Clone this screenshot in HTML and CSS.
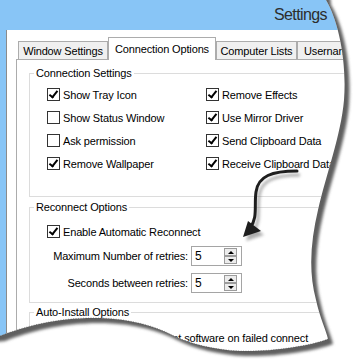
FILE: index.html
```html
<!DOCTYPE html>
<html lang="en">
<head>
    <meta charset="UTF-8">
    <title>Settings</title>
    <link rel="stylesheet" href="styles.css">
</head>
<body>
    <div class="window">
        <div class="titlebar">Settings</div>
        <div class="client">
            <div class="tabctrl">
                <div class="tabs">
                    <div class="tab t1">Window Settings</div>
                    <div class="tab t2 active">Connection Options</div>
                    <div class="tab t3">Computer Lists</div>
                    <div class="tab t4">Usernames</div>
                </div>
                <div class="panel">
                    <fieldset class="group group-connection">
                        <legend>Connection Settings</legend>
                        <div class="check-grid">
                            <label class="check"><span class="cb on"></span>Show Tray Icon</label>
                            <label class="check"><span class="cb on"></span>Remove Effects</label>
                            <label class="check"><span class="cb"></span>Show Status Window</label>
                            <label class="check"><span class="cb on"></span>Use Mirror Driver</label>
                            <label class="check"><span class="cb"></span>Ask permission</label>
                            <label class="check"><span class="cb on"></span>Send Clipboard Data</label>
                            <label class="check"><span class="cb on"></span>Remove Wallpaper</label>
                            <label class="check"><span class="cb on"></span>Receive Clipboard Data</label>
                        </div>
                    </fieldset>

                    <fieldset class="group group-reconnect">
                        <legend>Reconnect Options</legend>
                        <label class="check single"><span class="cb on"></span>Enable Automatic Reconnect</label>
                        <div class="retries">
                            <span class="field-label">Maximum Number of retries:</span>
                            <div class="spin">
                                <span class="spin-value">5</span>
                                <span class="spin-buttons"><span class="spin-btn up"></span><span class="spin-btn down"></span></span>
                            </div>
                            <span class="field-label">Seconds between retries:</span>
                            <div class="spin">
                                <span class="spin-value">5</span>
                                <span class="spin-buttons"><span class="spin-btn up"></span><span class="spin-btn down"></span></span>
                            </div>
                        </div>
                    </fieldset>

                    <fieldset class="group group-install">
                        <legend>Auto-Install Options</legend>
                        <label class="check single"><span class="cb on"></span>Auto-install management software on failed connect</label>
                    </fieldset>
                </div>
            </div>
        </div>
    </div>

    <!-- torn paper edge, shadow and callout arrow -->
    <svg class="torn" width="353" height="362" viewBox="0 0 353 362">
        <defs>
            <filter id="soft" x="-20%" y="-20%" width="140%" height="140%">
                <feGaussianBlur stdDeviation="1.6"/>
            </filter>
            <clipPath id="outside">
                <path clip-rule="evenodd" d="M-20 -20H380V380H-20Z M-10 -10 L325 -10 L326 0 C338 20 347 60 344 100 C341 135 326 175 318 210 C311 240 308 270 316 300 C320 318 326 330 328 339 C310 346 270 352 240 351 C215 350 190 344 172 335 C155 326 130 319 100 318 C60 317 25 326 0 336 L-10 337 Z"/>
            </clipPath>
        </defs>

        <g class="arrow-shadow" transform="translate(3 4)" filter="url(#soft)">
            <path d="M297 171 C272 171 258 176 256 192 C254 206 258 218 250 228" fill="none" stroke="#777" stroke-width="3"/>
            <polygon points="243,237 248,221 261,231" fill="#777"/>
        </g>
        <path d="M297 171 C272 171 258 176 256 192 C254 206 258 218 250 228" fill="none" stroke="#1e1e1e" stroke-width="3" stroke-linecap="round"/>
        <polygon points="243,237 248,221 261,231" fill="#1e1e1e"/>

        <path fill="#fff" fill-rule="evenodd" d="M-20 -20H380V380H-20Z M-10 -10 L325 -10 L326 0 C338 20 347 60 344 100 C341 135 326 175 318 210 C311 240 308 270 316 300 C320 318 326 330 328 339 C310 346 270 352 240 351 C215 350 190 344 172 335 C155 326 130 319 100 318 C60 317 25 326 0 336 L-10 337 Z"/>
        <g clip-path="url(#outside)">
            <path fill="#5e5e5e" filter="url(#soft)" transform="translate(5 5)" d="M-10 -10 L325 -10 L326 0 C338 20 347 60 344 100 C341 135 326 175 318 210 C311 240 308 270 316 300 C320 318 326 330 328 339 C310 346 270 352 240 351 C215 350 190 344 172 335 C155 326 130 319 100 318 C60 317 25 326 0 336 L-10 337 Z"/>
        </g>
        <path class="tear" d="M328 339 C310 346 270 352 240 351 C215 350 190 344 172 335 C155 326 130 319 100 318 C60 317 25 326 0 336"/>
    </svg>
</body>
</html>
```

FILE: styles.css
```css
body {
    margin: 0;
    width: 353px;
    height: 362px;
    overflow: hidden;
    position: relative;
    background-color: #fff;
    font-family: 'Liberation Sans', Arial, sans-serif;
    font-size: 11px;
    letter-spacing: -0.15px;
    color: #000;
}
.window {
    width: 353px;
    height: 362px;
    background-color: #88c5f6;
    display: flex;
    flex-direction: column;
}
.titlebar {
    height: 30px;
    line-height: 30px;
    text-align: right;
    padding-right: 26px;
    font-size: 16px;
    letter-spacing: -0.6px;
    color: #2d2d2d;
}
.client {
    flex: 1;
    margin-left: 6px;
    border-left: 1px solid #8b8b8b;
    background-color: #fff;
    padding: 7px 0 0 9px;
    overflow: hidden;
}
.tabs {
    display: flex;
    align-items: flex-end;
    padding-left: 2px;
}
.tab {
    flex-shrink: 0;
    box-sizing: border-box;
    height: 18px;
    border: 1px solid #acacac;
    border-bottom: none;
    background-color: #f0f0f0;
    padding-top: 1px;
    line-height: 16px;
    text-align: center;
    white-space: nowrap;
}
.t1 { width: 90px; }
.t2 { width: 108px; }
.t3 { width: 81px; }
.t4 {
    width: 80px;
    text-align: left;
    padding-left: 6px;
}
.tab.active {
    height: 23px;
    padding-top: 3px;
    margin-bottom: -1px;
    background-color: #fff;
    position: relative;
    z-index: 1;
}
.panel {
    border-top: 1px solid #acacac;
    border-left: 1px solid #acacac;
    padding-left: 12px;
}
.group {
    margin: 0;
    padding: 0;
    min-width: 0;
    border: 1px solid #dcdcdc;
    border-right: none;
}
.group legend {
    margin-left: 4px;
    padding: 0 2px;
    line-height: 13px;
}
.group-connection {
    margin-top: 7px;
    padding: 3px 0 21px;
}
.group-reconnect {
    margin-top: 4px;
    padding: 6px 0 9px;
}
.group-install {
    margin-top: 3px;
    padding: 7px 0 20px;
}
.check-grid {
    display: grid;
    grid-template-columns: 159px auto;
    grid-auto-rows: 23px;
    padding-left: 17px;
}
.check {
    display: flex;
    align-items: center;
    gap: 3px;
    white-space: nowrap;
}
.check.single {
    height: 23px;
    padding-left: 17px;
}
.cb {
    flex-shrink: 0;
    box-sizing: border-box;
    width: 13px;
    height: 13px;
    border: 1px solid #333;
    background-color: #fff;
    position: relative;
}
.cb.on::after {
    content: '';
    position: absolute;
    left: 3px;
    top: 0px;
    width: 3px;
    height: 7px;
    border: solid #000;
    border-width: 0 2px 2px 0;
    transform: rotate(38deg);
}
.retries {
    display: grid;
    grid-template-columns: 158px 51px;
    column-gap: 3px;
    row-gap: 7px;
    align-items: center;
    margin-top: 3px;
}
.field-label {
    text-align: right;
    white-space: nowrap;
}
.spin {
    box-sizing: border-box;
    height: 20px;
    border: 1px solid #a5a5a5;
    display: flex;
    align-items: center;
    justify-content: space-between;
    padding: 0 4px 0 3px;
}
.spin-value {
    font-size: 12px;
}
.spin-buttons {
    display: flex;
    flex-direction: column;
}
.spin-btn {
    box-sizing: border-box;
    width: 13px;
    height: 8px;
    border: 1px solid #9c9c9c;
    background-color: #ececec;
    display: flex;
    align-items: center;
    justify-content: center;
}
.spin-btn::before {
    content: '';
    border-left: 3px solid transparent;
    border-right: 3px solid transparent;
}
.spin-btn.up::before {
    border-bottom: 3px solid #000;
}
.spin-btn.down::before {
    border-top: 3px solid #000;
}
.torn {
    position: absolute;
    top: 0;
    left: 0;
    pointer-events: none;
}
.arrow-shadow {
    opacity: 0.6;
}
.tear {
    fill: none;
    stroke: #444;
    stroke-width: 0.8;
    stroke-dasharray: 1 1.5;
    opacity: 0.6;
}
```
